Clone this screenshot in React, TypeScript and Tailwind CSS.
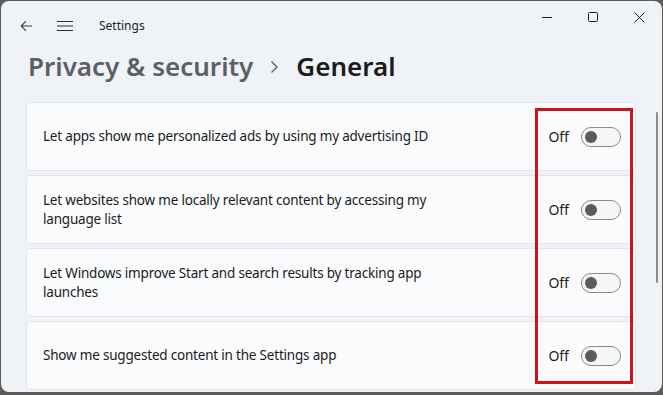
const items = [
  "Let apps show me personalized ads by using my advertising ID",
  "Let websites show me locally relevant content by accessing my language list",
  "Let Windows improve Start and search results by tracking app launches",
  "Show me suggested content in the Settings app",
];

export default function App() {
  return (
    <div className="h-[395px] w-[663px] overflow-hidden bg-[#5b5b5b] pl-px pt-px font-['Noto_Sans',sans-serif]">
      <div className="relative flex h-[391px] w-[661px] flex-col overflow-hidden rounded-[8px] bg-[#eff3f8]">
        <TitleBar />

        <div className="flex h-[52px] items-center gap-[17px] pb-[20px] pl-[27px]">
          <span className="text-[26px] font-semibold leading-none text-[#5d5f62]">Privacy &amp; security</span>
          <svg width="9" height="14" viewBox="0 0 9 14" className="mt-[2px]">
            <path d="M1.5 1.5 L7 7 L1.5 12.5" fill="none" stroke="#5d5f62" strokeWidth="1.4" />
          </svg>
          <span className="text-[26px] font-semibold leading-none text-[#1b1b1b]">General</span>
        </div>

        <div className="flex flex-col gap-[4px] pl-[25px]">
          {items.map((text) => (
            <SettingRow key={text} text={text} />
          ))}
        </div>

        {/* overlay scrollbar */}
        <div className="absolute left-[655px] top-[111px] h-[171px] w-[2px] rounded-full bg-[#8b8d90]" />

        {/* red highlight box */}
        <div className="absolute left-[534px] top-[107px] h-[276px] w-[98px] border-[3px] border-[#d2111b]" />
      </div>
    </div>
  );
}

function TitleBar() {
  return (
    <div className="flex h-[49px] items-start">
      <div className="flex h-[49px] items-center pl-[19px]">
        <svg width="13" height="12" viewBox="0 0 13 12">
          <path d="M12 6 H1.5 M6 1.2 L1.2 6 L6 10.8" fill="none" stroke="#3a3a3a" strokeWidth="1.1" />
        </svg>
        <svg width="16" height="12" viewBox="0 0 16 12" className="ml-[24px]">
          <path d="M0 1.5 H16 M0 6 H16 M0 10.5 H16" fill="none" stroke="#2e2e2e" strokeWidth="1.1" />
        </svg>
        <span className="ml-[26px] text-[12px] text-[#1f1f1f]">Settings</span>
      </div>
      <div className="ml-auto flex h-[32px] items-center">
        <div className="flex w-[46px] justify-center">
          <svg width="10" height="10" viewBox="0 0 10 10">
            <path d="M0 5.5 H10" stroke="#1f1f1f" strokeWidth="1" />
          </svg>
        </div>
        <div className="flex w-[46px] justify-center">
          <svg width="10" height="10" viewBox="0 0 10 10">
            <rect x="0.5" y="0.5" width="9" height="9" rx="1" fill="none" stroke="#1f1f1f" strokeWidth="1" />
          </svg>
        </div>
        <div className="flex w-[46px] justify-center">
          <svg width="11" height="11" viewBox="0 0 11 11">
            <path d="M0.5 0.5 L10.5 10.5 M10.5 0.5 L0.5 10.5" stroke="#1f1f1f" strokeWidth="1" />
          </svg>
        </div>
      </div>
    </div>
  );
}

function SettingRow({ text }: { text: string }) {
  return (
    <div className="flex h-[69px] w-[610px] items-center rounded-[4px] border border-[#e3e5e8] bg-[#f9fbfd] pl-[16px] pr-[14px]">
      <span className="w-[410px] text-[13.5px] leading-[19px] tracking-[-0.2px] text-[#1b1b1b]">{text}</span>
      <span className="ml-auto text-[14px] text-[#1b1b1b]">Off</span>
      <div className="ml-[12px] flex h-[20px] w-[40px] items-center rounded-full border border-[#8a8a8a] bg-[#f6f6f6] pl-[3px]">
        <div className="h-[12px] w-[12px] rounded-full bg-[#5b5b5b]" />
      </div>
    </div>
  );
}
